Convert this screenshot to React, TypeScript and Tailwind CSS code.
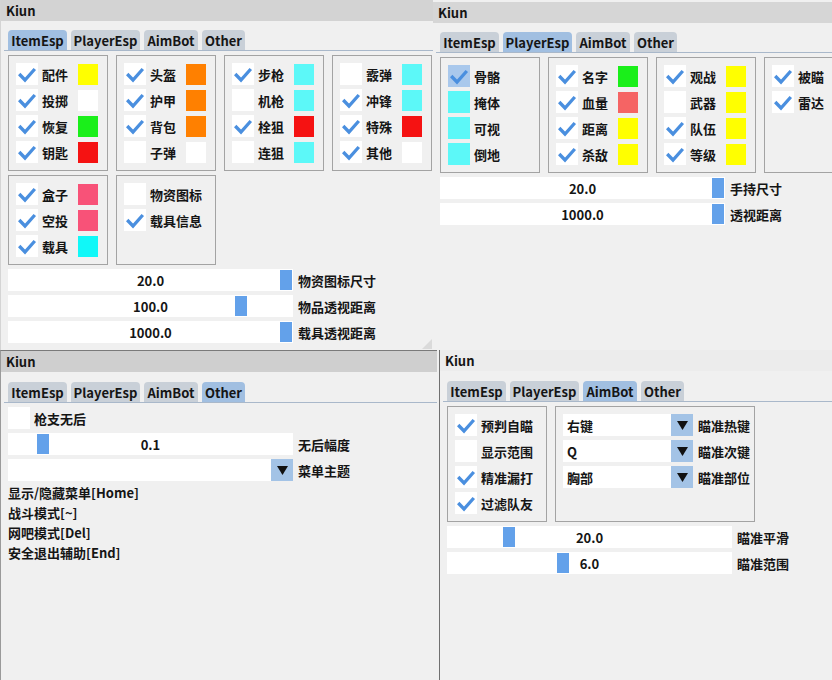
import React from 'react';

type Row = { label: string; checked?: boolean; swatch?: string; lead?: string; hover?: boolean };

function Check({ checked, hover }: { checked?: boolean; hover?: boolean }) {
  return (
    <div className={`w-[22px] h-[22px] shrink-0 ${hover ? 'bg-[#a9c8ec]' : 'bg-white'}`}>
      {checked && (
        <svg width="22" height="22" viewBox="0 0 22 22">
          <polyline points="3.2,11 9,17 18.8,6" fill="none" stroke="#4a8fdf" strokeWidth="3.3" />
        </svg>
      )}
    </div>
  );
}

function ItemRow({ r }: { r: Row }) {
  return (
    <div className="flex items-center h-[22px]">
      {r.lead ? <div className={`w-[22px] h-[22px] shrink-0 ${r.lead}`} /> : <Check checked={r.checked} hover={r.hover} />}
      <span className="ml-[4px] min-w-[36px] whitespace-nowrap leading-none">{r.label}</span>
      {r.swatch && <div className={`w-[20px] h-[21px] shrink-0 ${r.swatch}`} />}
    </div>
  );
}

function Box({ rows, w = 'w-[100px]' }: { rows: Row[]; w?: string }) {
  return (
    <div className={`${w} shrink-0 border border-[#a3a3a3] pt-[7px] pl-[7px] pb-[7px] flex flex-col gap-[4px]`}>
      {rows.map((r) => (
        <ItemRow key={r.label} r={r} />
      ))}
    </div>
  );
}

function Slider({ value, grab, label }: { value: string; grab: number; label: string }) {
  return (
    <div className="flex items-center h-[22px]">
      <div className="relative w-[285px] h-[22px] shrink-0 bg-white flex items-center justify-center">
        <div className="absolute top-[1px] bottom-[1px] w-[12px] bg-[#63a1ea]" style={{ left: grab }} />
        <span className="relative leading-none">{value}</span>
      </div>
      <span className="ml-[5px] whitespace-nowrap leading-none">{label}</span>
    </div>
  );
}

function Arrow() {
  return (
    <div className="w-[22px] h-[22px] shrink-0 bg-[#a3c3e6] flex items-center justify-center">
      <svg width="11" height="9" viewBox="0 0 11 9">
        <polygon points="0,0 11,0 5.5,9" fill="#111" />
      </svg>
    </div>
  );
}

function Combo({ value, label, w }: { value: string; label: string; w: string }) {
  return (
    <div className="flex items-center h-[22px]">
      <div className={`${w} h-[22px] shrink-0 bg-white flex items-center pl-[4px] leading-none`}>{value}</div>
      <Arrow />
      <span className="ml-[5px] whitespace-nowrap leading-none">{label}</span>
    </div>
  );
}

const TABS: [string, string][] = [
  ['ItemEsp', 'w-[59px]'],
  ['PlayerEsp', 'w-[69px]'],
  ['AimBot', 'w-[54px]'],
  ['Other', 'w-[43px]'],
];

function Tabs({ active }: { active: string }) {
  return (
    <div className="ml-[-4px] border-b border-[#a9b8ca] flex gap-[4px] pl-[4px]">
      {TABS.map(([t, w]) => (
        <div
          key={t}
          className={`${w} h-[20px] rounded-t-[4px] flex items-center justify-center leading-none ${
            t === active ? 'bg-[#a1bfe1]' : 'bg-[#c9d0d8]'
          }`}
        >
          {t}
        </div>
      ))}
    </div>
  );
}

function TitleBar({ bg }: { bg: string }) {
  return <div className={`h-[21px] shrink-0 pl-[5px] flex items-center leading-none ${bg}`}>Kiun</div>;
}

const C = {
  yellow: 'bg-[#ffff00]',
  orange: 'bg-[#ff8000]',
  green: 'bg-[#1aef1a]',
  red: 'bg-[#f51212]',
  cyan: 'bg-[#5cf8f8]',
  cyan2: 'bg-[#10f8f8]',
  pink: 'bg-[#f85278]',
  white: 'bg-white',
  salmon: 'bg-[#f56464]',
};

export default function App() {
  return (
    <div className="relative w-[832px] h-[680px] overflow-hidden bg-[#f0f0f0] text-[13px] font-bold text-[#151515] font-['Noto_Sans_CJK_SC','Noto_Sans',sans-serif]">
      {/* Window 1: ItemEsp */}
      <div className="absolute left-0 top-0 w-[433px] h-[350px] flex flex-col bg-[#f0f0f0] overflow-hidden border-l border-[#d4d4d4]">
        <TitleBar bg="bg-[#d3d3d3]" />
        <div className="pl-[7px] pt-[9px] flex flex-col">
          <Tabs active="ItemEsp" />
          <div className="mt-[4px] flex gap-[8px]">
            <Box
              rows={[
                { label: '配件', checked: true, swatch: C.yellow },
                { label: '投掷', checked: true, swatch: C.white },
                { label: '恢复', checked: true, swatch: C.green },
                { label: '钥匙', checked: true, swatch: C.red },
              ]}
            />
            <Box
              rows={[
                { label: '头盔', checked: true, swatch: C.orange },
                { label: '护甲', checked: true, swatch: C.orange },
                { label: '背包', checked: true, swatch: C.orange },
                { label: '子弹', checked: false, swatch: C.white },
              ]}
            />
            <Box
              rows={[
                { label: '步枪', checked: true, swatch: C.cyan },
                { label: '机枪', checked: false, swatch: C.cyan },
                { label: '栓狙', checked: true, swatch: C.red },
                { label: '连狙', checked: false, swatch: C.cyan },
              ]}
            />
            <Box
              rows={[
                { label: '霰弹', checked: false, swatch: C.cyan },
                { label: '冲锋', checked: true, swatch: C.cyan },
                { label: '特殊', checked: true, swatch: C.red },
                { label: '其他', checked: true, swatch: C.white },
              ]}
            />
          </div>
          <div className="mt-[4px] flex gap-[8px]">
            <Box
              rows={[
                { label: '盒子', checked: true, swatch: C.pink },
                { label: '空投', checked: true, swatch: C.pink },
                { label: '载具', checked: true, swatch: C.cyan2 },
              ]}
            />
            <Box
              rows={[
                { label: '物资图标', checked: false },
                { label: '载具信息', checked: true },
              ]}
            />
          </div>
          <div className="mt-[4px] flex flex-col gap-[4px]">
            <Slider value="20.0" grab={272} label="物资图标尺寸" />
            <Slider value="100.0" grab={227} label="物品透视距离" />
            <Slider value="1000.0" grab={272} label="载具透视距离" />
          </div>
        </div>
        <svg className="absolute right-[1px] bottom-[1px]" width="10" height="10" viewBox="0 0 10 10">
          <polygon points="10,0 10,10 0,10" fill="#dadada" />
        </svg>
      </div>

      {/* Window 2: PlayerEsp */}
      <div className="absolute left-[433px] top-[2px] w-[399px] h-[348px] flex flex-col bg-[#f0f0f0] overflow-hidden">
        <TitleBar bg="bg-[#d6d6d6]" />
        <div className="pl-[7px] pt-[9px] flex flex-col">
          <Tabs active="PlayerEsp" />
          <div className="mt-[4px] flex gap-[8px]">
            <Box
              rows={[
                { label: '骨骼', checked: true, hover: true },
                { label: '掩体', lead: C.cyan },
                { label: '可视', lead: C.cyan },
                { label: '倒地', lead: C.cyan },
              ]}
            />
            <Box
              rows={[
                { label: '名字', checked: true, swatch: C.green },
                { label: '血量', checked: true, swatch: C.salmon },
                { label: '距离', checked: true, swatch: C.yellow },
                { label: '杀敌', checked: true, swatch: C.yellow },
              ]}
            />
            <Box
              rows={[
                { label: '观战', checked: true, swatch: C.yellow },
                { label: '武器', checked: false, swatch: C.yellow },
                { label: '队伍', checked: true, swatch: C.yellow },
                { label: '等级', checked: true, swatch: C.yellow },
              ]}
            />
            <Box
              rows={[
                { label: '被瞄', checked: true },
                { label: '雷达', checked: true },
              ]}
            />
          </div>
          <div className="mt-[4px] flex flex-col gap-[4px]">
            <Slider value="20.0" grab={272} label="手持尺寸" />
            <Slider value="1000.0" grab={272} label="透视距离" />
          </div>
        </div>
      </div>

      {/* Window 3: Other */}
      <div className="absolute left-0 top-[350px] w-[437px] h-[330px] flex flex-col bg-[#f0f0f0] overflow-hidden border-t border-[#7a7a7a] border-l border-l-[#9a9a9a]">
        <TitleBar bg="bg-[#cfcfcf]" />
        <div className="pl-[7px] pt-[10px] flex flex-col">
          <Tabs active="Other" />
          <div className="mt-[4px] flex flex-col gap-[4px]">
            <div className="flex items-center h-[22px]">
              <Check checked={false} />
              <span className="ml-[4px] leading-none">枪支无后</span>
            </div>
            <Slider value="0.1" grab={29} label="无后幅度" />
            <Combo value="" label="菜单主题" w="w-[263px]" />
            <div className="flex flex-col gap-[4px] leading-[16px]">
              <span>显示/隐藏菜单[Home]</span>
              <span>战斗模式[~]</span>
              <span>网吧模式[Del]</span>
              <span>安全退出辅助[End]</span>
            </div>
          </div>
        </div>
      </div>

      {/* Window 4: AimBot */}
      <div className="absolute left-[439px] top-[350px] w-[393px] h-[330px] flex flex-col bg-[#f0f0f0] overflow-hidden border-l border-[#707070]">
        <TitleBar bg="bg-[#ececec]" />
        <div className="pl-[7px] pt-[10px] flex flex-col">
          <Tabs active="AimBot" />
          <div className="mt-[4px] flex gap-[8px]">
            <Box
              rows={[
                { label: '预判自瞄', checked: true },
                { label: '显示范围', checked: false },
                { label: '精准漏打', checked: true },
                { label: '过滤队友', checked: true },
              ]}
            />
            <div className="w-[200px] shrink-0 border border-[#a3a3a3] pt-[7px] pl-[7px] flex flex-col gap-[4px]">
              <Combo value="右键" label="瞄准热键" w="w-[108px]" />
              <Combo value="Q" label="瞄准次键" w="w-[108px]" />
              <Combo value="胸部" label="瞄准部位" w="w-[108px]" />
            </div>
          </div>
          <div className="mt-[4px] flex flex-col gap-[4px]">
            <Slider value="20.0" grab={56} label="瞄准平滑" />
            <Slider value="6.0" grab={110} label="瞄准范围" />
          </div>
        </div>
      </div>
    </div>
  );
}
